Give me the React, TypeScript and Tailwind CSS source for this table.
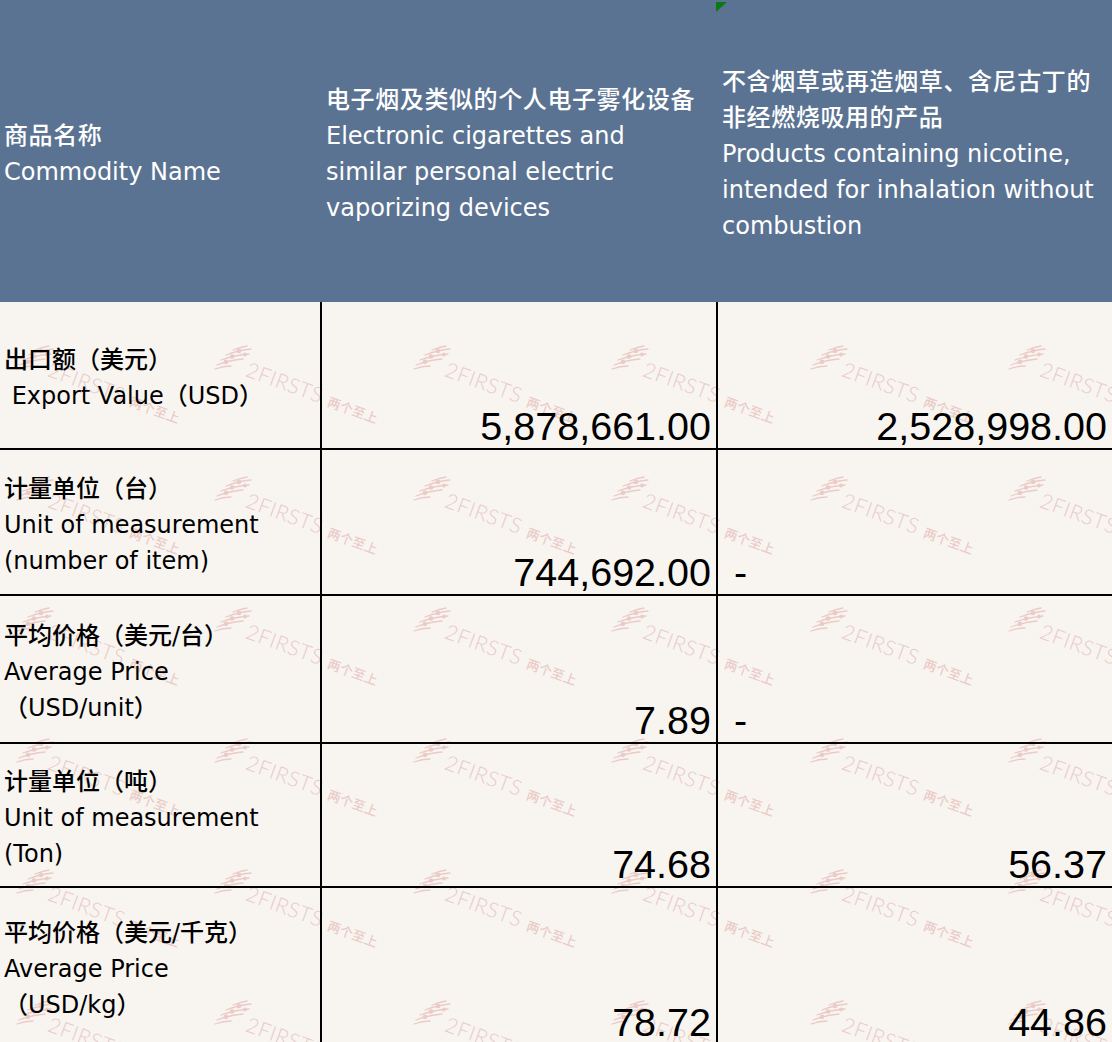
import React from 'react';

interface TableRow {
  label: string[];
  cig: string;
  nic: string;
  h: string;
  last?: boolean;
}

const rows: TableRow[] = [
  { label: ['出口额（美元）', ' Export Value（USD）'], cig: '5,878,661.00', nic: '2,528,998.00', h: 'h-[148px]' },
  { label: ['计量单位（台）', 'Unit of measurement', '(number of item)'], cig: '744,692.00', nic: '-', h: 'h-[146px]' },
  { label: ['平均价格（美元/台）', 'Average Price', '（USD/unit）'], cig: '7.89', nic: '-', h: 'h-[148px]' },
  { label: ['计量单位（吨）', 'Unit of measurement', '(Ton)'], cig: '74.68', nic: '56.37', h: 'h-[144px]' },
  { label: ['平均价格（美元/千克）', 'Average Price', '（USD/kg）'], cig: '78.72', nic: '44.86', h: 'h-[156px]', last: true },
];

const WM = '#eacbc7';

// 2FIRSTS watermark, tiled over the body
const Watermark = ({ x, y }: { x: number; y: number }) => (
  <div className="absolute" style={{ left: x, top: y }}>
    <svg width="42" height="28" viewBox="0 0 42 28" fill="none" stroke={WM} strokeWidth="1.3" strokeLinecap="round">
      <path d="M20 5 Q28 2 34 1" />
      <path d="M13 10 Q26 5 38 4" />
      <path d="M8 15 Q22 10 36 9" />
      <path d="M4 20 Q17 15 30 14" />
      <path d="M2 24 Q10 21 18 21" />
      <circle cx="26" cy="6" r="1.7" fill={WM} />
      <circle cx="19" cy="11.5" r="1.7" fill={WM} />
      <circle cx="13" cy="16.8" r="1.7" fill={WM} />
      <circle cx="32" cy="9.5" r="1.3" fill={WM} />
    </svg>
    <div className="absolute left-[38px] top-[13px] origin-top-left rotate-[20deg] flex items-baseline whitespace-nowrap text-[#eacbc7]">
      <span className="[font-family:Lato,sans-serif] font-light text-[21px] leading-none tracking-[0.5px]">2FIRSTS</span>
      <span className="ml-[7px] [font-family:'Noto_Sans_CJK_SC',sans-serif] text-[13px] leading-none">两个至上</span>
    </div>
  </div>
);

const HeaderCell = ({ lines, w, pl }: { lines: { t: string; cjk?: boolean }[]; w: string; pl: string }) => (
  <div className={`${w} ${pl} pt-[6px] flex flex-col justify-center`}>
    {lines.map((l, i) => (
      <div key={i} className={`whitespace-nowrap ${l.cjk ? 'tracking-[0.6px]' : ''}`}>
        {l.t}
      </div>
    ))}
  </div>
);

const App = () => {
  const marks: { x: number; y: number }[] = [];
  for (let j = 0; j < 6; j++) {
    for (let i = 0; i < 6; i++) {
      marks.push({ x: Math.round(15 + 198.4 * i), y: 43 + 131 * j });
    }
  }

  return (
    <div className="w-[1112px] h-[1042px] overflow-hidden bg-[#f8f5f1] [font-family:'DejaVu_Sans','Noto_Sans_CJK_SC',sans-serif] font-medium text-[24px] leading-[36px]">
      {/* cabecera */}
      <div className="relative flex h-[302px] bg-[#5b7392] text-white">
        <HeaderCell w="w-[320px]" pl="pl-[4px]" lines={[{ t: '商品名称', cjk: true }, { t: 'Commodity Name' }]} />
        <HeaderCell
          w="w-[396px]"
          pl="pl-[6px]"
          lines={[
            { t: '电子烟及类似的个人电子雾化设备', cjk: true },
            { t: 'Electronic cigarettes and' },
            { t: 'similar personal electric' },
            { t: 'vaporizing devices' },
          ]}
        />
        <HeaderCell
          w="w-[396px]"
          pl="pl-[6px]"
          lines={[
            { t: '不含烟草或再造烟草、含尼古丁的', cjk: true },
            { t: '非经燃烧吸用的产品', cjk: true },
            { t: 'Products containing nicotine,' },
            { t: 'intended for inhalation without' },
            { t: 'combustion' },
          ]}
        />
        <svg className="absolute left-[716px] top-[2px]" width="11" height="10" viewBox="0 0 11 10">
          <polygon points="0,0 11,0 0,10" fill="#0b7a12" />
        </svg>
      </div>

      {/* cuerpo */}
      <div className="relative">
        <div className="absolute inset-0 overflow-hidden pointer-events-none">
          {marks.map((m, k) => (
            <Watermark key={k} x={m.x} y={m.y} />
          ))}
        </div>
        {rows.map((r, idx) => (
          <div
            key={idx}
            className={`relative grid grid-cols-[320px_396px_396px] ${r.h} ${r.last ? '' : 'border-b-2 border-black'}`}
          >
            <div className="flex flex-col justify-center pl-[4px] pt-[6px] text-black">
              {r.label.map((l, i) => (
                <div key={i} className="whitespace-pre">
                  {l}
                </div>
              ))}
            </div>
            <div className="flex items-end justify-end border-l-2 border-black pr-[5px] pb-[2px]">
              <span className="[font-family:'Liberation_Sans',Arial,sans-serif] font-normal text-[39.5px] leading-none text-black">{r.cig}</span>
            </div>
            <div
              className={`flex items-end border-l-2 border-black pb-[2px] ${
                r.nic === '-' ? 'justify-start pl-4' : 'justify-end pr-[5px]'
              }`}
            >
              <span className="[font-family:'Liberation_Sans',Arial,sans-serif] font-normal text-[39.5px] leading-none text-black">{r.nic}</span>
            </div>
          </div>
        ))}
      </div>
    </div>
  );
};

export default App;
